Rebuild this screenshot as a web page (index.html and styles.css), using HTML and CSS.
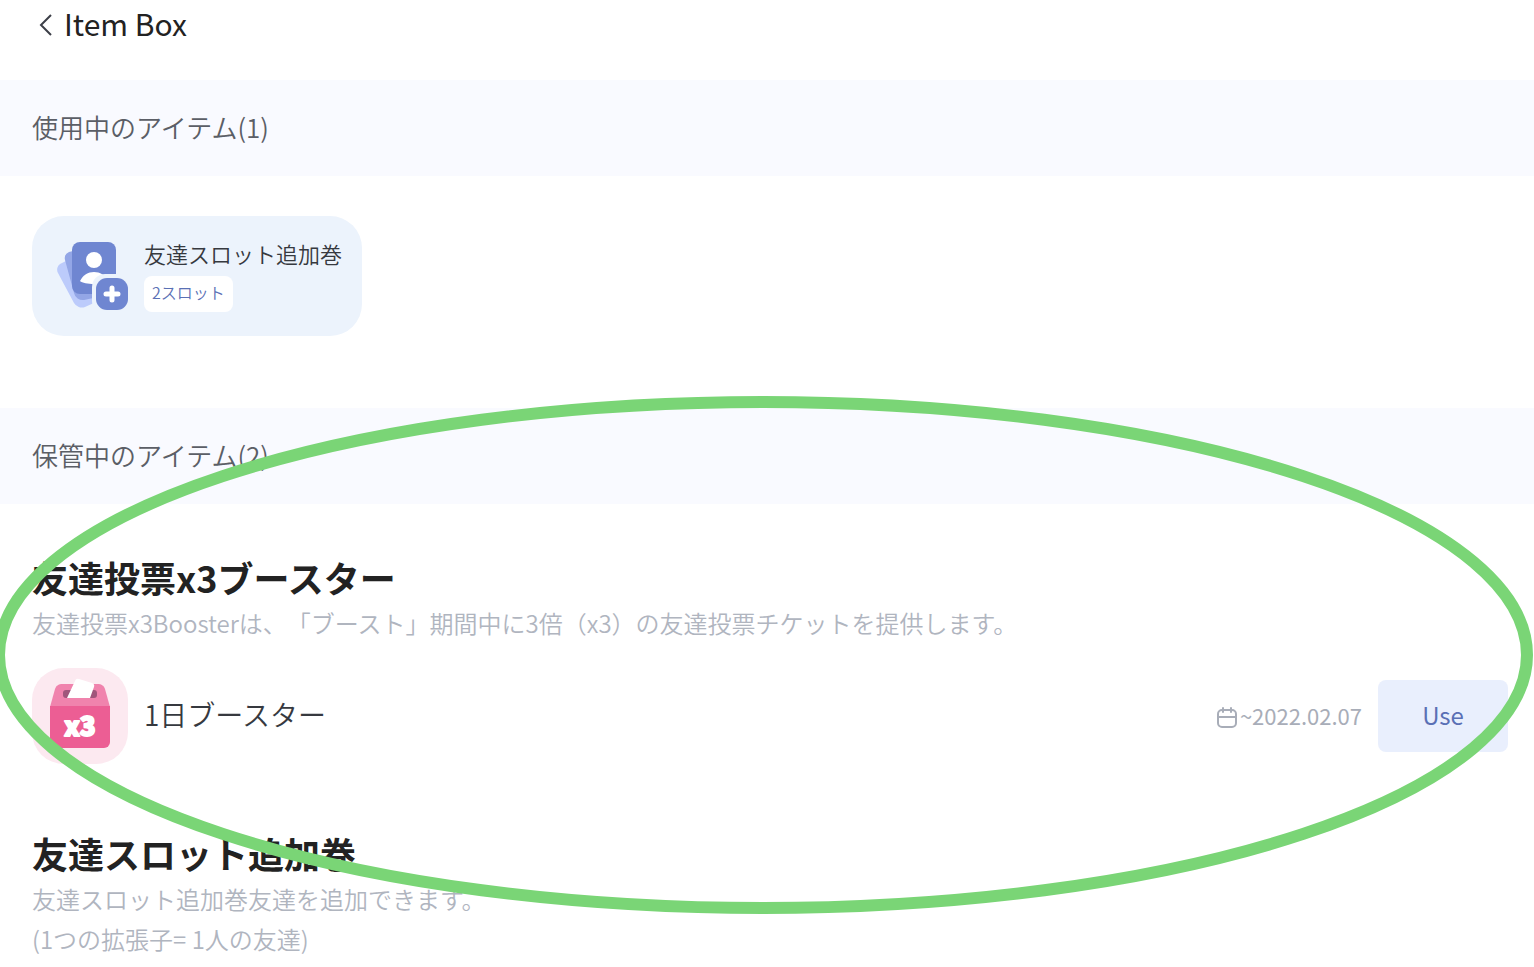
FILE: index.html
```html
<!DOCTYPE html>
<html lang="ja">
<head>
    <meta charset="UTF-8">
    <meta name="viewport" content="width=device-width, initial-scale=1.0">
    <title>Item Box</title>
    <link rel="stylesheet" href="styles.css">
</head>
<body>
    <header class="page-header">
        <a class="back-link" href="#" aria-label="Back">
            <svg width="16" height="24" viewBox="0 0 16 24" fill="none" stroke="#3c3f48" stroke-width="2"><path d="M13 2L3 12l10 10"/></svg>
        </a>
        <h1 class="page-title">Item Box</h1>
    </header>

    <main>
        <section>
            <h2 class="section-title">使用中のアイテム(1)</h2>
            <div class="active-items">
                <div class="active-card">
                    <svg class="slot-icon" width="72" height="72" viewBox="0 0 72 72">
                        <path d="M12 20L4 24a7 7 0 0 0-2 9l16 30a9 9 0 0 0 11 4l11-5z" fill="#bccbfb"/>
                        <path d="M17 11l-4 1a7 7 0 0 0-4 8l9 33a9 9 0 0 0 10 7l14-3z" fill="#93a6e6"/>
                        <rect x="16" y="2" width="44" height="52" rx="8" fill="#6f86d1"/>
                        <circle cx="38" cy="20" r="8" fill="#fff"/>
                        <path d="M24 41c3-6 8-9 14-9s11 3 14 9c-4 4-24 4-28 0z" fill="#fff"/>
                        <rect x="36" y="34" width="40" height="40" rx="13" fill="#ecf3fc"/>
                        <rect x="40" y="38" width="32" height="32" rx="11" fill="#6f86d1"/>
                        <path d="M56 48v12M50 54h12" stroke="#fff" stroke-width="5" stroke-linecap="round"/>
                    </svg>
                    <div class="card-text">
                        <div class="card-name">友達スロット追加巻</div>
                        <span class="slot-count">2スロット</span>
                    </div>
                </div>
            </div>
        </section>

        <section class="stored">
            <h2 class="section-title">保管中のアイテム(2)</h2>
            <div class="item-group">
                <h3 class="item-title">友達投票x3ブースター</h3>
                <p class="item-desc">友達投票x3Boosterは、「ブースト」期間中に3倍（x3）の友達投票チケットを提供します。</p>
                <div class="item-row">
                    <svg class="booster-icon" width="96" height="96" viewBox="0 0 96 96">
                        <path d="M31 16h34c5 0 7 2 8 5l5 18H18l5-18c1-3 3-5 8-5z" fill="#f083ad"/>
                        <rect x="31" y="22" width="34" height="8" rx="3" fill="#a0567b"/>
                        <path d="M43 13q1-3 4-2l13 4q3 1 2 4l-4 11H35z" fill="#fff"/>
                        <path d="M18 38h60v36a6 6 0 0 1-6 6H24a6 6 0 0 1-6-6z" fill="#ec5e94"/>
                        <text class="booster-mark" x="48" y="68" text-anchor="middle">x3</text>
                    </svg>
                    <span class="item-name">1日ブースター</span>
                    <span class="expiry">
                        <svg width="22" height="24" viewBox="0 0 22 24" fill="none" stroke="#a8adb8" stroke-width="2" stroke-linecap="round"><rect x="2" y="6" width="18" height="17" rx="4"/><path d="M2 13h18M7 4v4M15 4v4"/></svg>
                        <span class="expiry-date">~2022.02.07</span>
                    </span>
                    <button class="use-button" type="button">Use</button>
                </div>
            </div>
            <div class="item-group">
                <h3 class="item-title">友達スロット追加巻</h3>
                <p class="item-desc">友達スロット追加巻友達を追加できます。<br>(1つの拡張子= 1人の友達)</p>
            </div>
            <svg class="highlight" viewBox="0 0 1534 520" preserveAspectRatio="none"><ellipse cx="763" cy="259" rx="764" ry="253"/></svg>
        </section>
    </main>
</body>
</html>
```
FILE: styles.css
```css
* {
    box-sizing: border-box;
}
body {
    margin: 0;
    font-family: "Noto Sans CJK JP", sans-serif;
    font-weight: 350;
    text-spacing-trim: space-all;
    color: #222;
    background-color: #fff;
    overflow-x: hidden;
}
h1, h2, h3, p {
    margin: 0;
}
.page-header {
    display: flex;
    align-items: center;
    gap: 10px;
    height: 80px;
    padding: 0 38px 30px;
}
.back-link {
    display: flex;
}
.page-title {
    padding-bottom: 4px;
    font-size: 30px;
    font-weight: 400;
    line-height: 44px;
}
.section-title {
    padding: 24px 32px 26px;
    font-size: 26px;
    font-weight: 350;
    line-height: 46px;
    color: #5b5e66;
    background-color: #f9faff;
}
.active-items {
    display: flex;
    padding: 40px 32px 72px;
}
.active-card {
    display: flex;
    align-items: center;
    gap: 16px;
    height: 120px;
    padding: 0 20px 0 24px;
    border-radius: 32px;
    background-color: #ecf3fc;
}
.card-name {
    margin-bottom: 10px;
    font-size: 22px;
    line-height: 26px;
    color: #36393f;
}
.slot-count {
    display: block;
    width: fit-content;
    padding: 0 8px 4px;
    border-radius: 8px;
    font-size: 16px;
    line-height: 32px;
    color: #5a70b5;
    background-color: #fff;
}
.stored {
    position: relative;
}
.item-group {
    padding: 48px 26px 16px 32px;
}
.item-title {
    padding-bottom: 1px;
    font-size: 36px;
    font-weight: 700;
    line-height: 50px;
}
.item-desc {
    padding-bottom: 1px;
    font-size: 24px;
    line-height: 40px;
    color: #b0b5bf;
}
.item-row {
    display: flex;
    align-items: center;
    margin-top: 24px;
}
.booster-icon {
    border-radius: 32px;
    background-color: #fce9f0;
}
.booster-mark {
    font-size: 26px;
    font-weight: 900;
    fill: #fff;
    stroke: #fff;
    stroke-width: 2;
    stroke-linejoin: round;
}
.item-name {
    flex: 1;
    margin-left: 16px;
    padding-bottom: 4px;
    font-size: 28px;
    color: #36393f;
}
.expiry {
    display: flex;
    align-items: center;
    gap: 2px;
    margin-right: 16px;
    font-size: 22px;
    font-weight: 400;
    color: #a8adb8;
}
.expiry-date {
    padding-bottom: 2px;
}
.use-button {
    width: 130px;
    height: 72px;
    padding: 0 0 4px;
    border: none;
    border-radius: 8px;
    font-family: inherit;
    font-size: 24px;
    color: #5a70b5;
    background-color: #e9effd;
    cursor: pointer;
}
.highlight {
    position: absolute;
    top: -12px;
    left: 0;
    width: 100%;
    height: 520px;
    overflow: visible;
    pointer-events: none;
}
.highlight ellipse {
    fill: none;
    stroke: #7ad576;
    stroke-width: 12;
}
```
